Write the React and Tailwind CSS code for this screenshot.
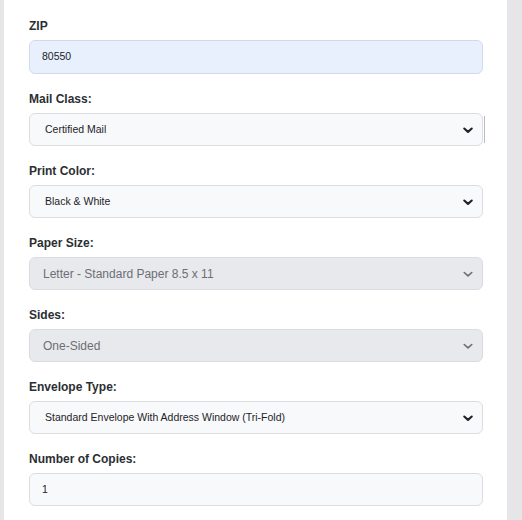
import React from 'react';

function Chevron({ muted }) {
    return (
        <svg
            className="absolute right-[9px] top-1/2 -translate-y-1/2 w-[12px] h-[12px]"
            viewBox="0 0 16 16"
            fill="none"
            stroke={muted ? '#6b6f75' : '#1f2328'}
            strokeWidth={muted ? 2.2 : 2.8}
            strokeLinecap="round"
            strokeLinejoin="round"
        >
            <path d="M3 6l5 4.5 5-4.5" />
        </svg>
    );
}

function Field({ label, children }) {
    return (
        <div className="mb-[17px]">
            <div className="text-[12px] leading-[16px] font-bold text-[#2b2f33] mb-[6px]">{label}</div>
            {children}
        </div>
    );
}

function Select({ value, disabled, extraLine }) {
    return (
        <div className="relative">
            <div
                className={
                    disabled
                        ? 'h-[33px] rounded-[6px] border border-[#d9dce0] bg-[#e8e9ec] pl-[13px] flex items-center text-[12px] text-[#6b6f75]'
                        : 'h-[33px] rounded-[6px] border border-[#dadde2] bg-[#f8f9fb] pl-[15px] flex items-center text-[10.5px] text-[#1f2328]'
                }
            >
                {value}
            </div>
            <Chevron muted={disabled} />
            {extraLine && (
                <span className="absolute right-[-2px] top-[3px] h-[27px] w-px bg-[#b9bcc2]" />
            )}
        </div>
    );
}

export default function App() {
    return (
        <div className="min-h-screen bg-[#e6e6e9] pl-[4px] pr-[15px]" style={{ fontFamily: '"Liberation Sans", Arial, sans-serif' }}>
            <div className="bg-white h-[520px] pl-[25px] pr-[24px] pt-[18px] overflow-hidden">
                <Field label="ZIP">
                    <div className="h-[34px] rounded-[6px] border border-[#d3d9e6] bg-[#e8f0fe] pl-[12px] flex items-center text-[10.5px] text-[#1f2328]">
                        80550
                    </div>
                </Field>
                <Field label="Mail Class:">
                    <Select value="Certified Mail" extraLine />
                </Field>
                <Field label="Print Color:">
                    <Select value="Black & White" />
                </Field>
                <Field label="Paper Size:">
                    <Select value="Letter - Standard Paper 8.5 x 11" disabled />
                </Field>
                <Field label="Sides:">
                    <Select value="One-Sided" disabled />
                </Field>
                <Field label="Envelope Type:">
                    <Select value="Standard Envelope With Address Window (Tri-Fold)" />
                </Field>
                <Field label="Number of Copies:">
                    <div className="h-[33px] rounded-[6px] border border-[#dadde2] bg-[#f8f9fb] pl-[12px] flex items-center text-[10.5px] text-[#1f2328]">
                        1
                    </div>
                </Field>
            </div>
        </div>
    );
}
